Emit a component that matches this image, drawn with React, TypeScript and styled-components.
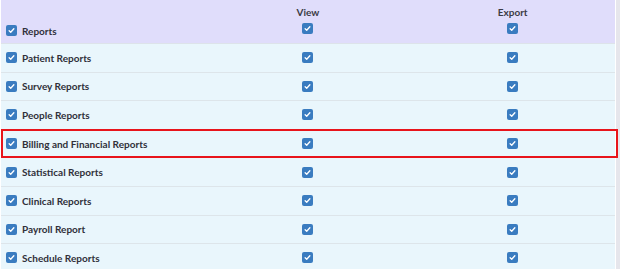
import React from 'react';
import styled, { createGlobalStyle } from 'styled-components';

const GlobalStyle = createGlobalStyle`
  html, body {
    margin: 0;
    padding: 0;
    background: #ffffff;
  }
  body {
    font-family: 'Lato', 'Open Sans', sans-serif;
  }
`;

const Frame = styled.div`
  width: 620px;
  height: 269px;
  overflow: hidden;
  display: flex;
  align-items: flex-start;
  background: #ffffff;
`;

const Table = styled.div`
  width: 614px;
  display: flex;
  flex-direction: column;
  border-left: 1px solid #ffffff;
`;

const ScrollEdge = styled.div`
  width: 4px;
  height: 269px;
  margin-left: 1px;
  background: #e6e6ec;
`;

const Header = styled.div`
  height: 44px;
  flex-shrink: 0;
  background: #e0ddfb;
  display: grid;
  grid-template-columns: repeat(3, 1fr);
  border-bottom: 1px solid #dde3ea;
  box-sizing: border-box;
`;

const HeadLabel = styled.div`
  display: flex;
  align-items: center;
  gap: 5px;
  padding: 18px 0 0 5px;
`;

const HeadCol = styled.div`
  display: flex;
  flex-direction: column;
  align-items: center;
  padding-top: 6px;
  gap: 5px;
`;

const HeadTitle = styled.span`
  font-size: 10px;
  font-weight: 700;
  color: #3b3b45;
  line-height: 12px;
`;

const Row = styled.div<{ $active?: boolean }>`
  height: 28.6px;
  flex-shrink: 0;
  box-sizing: border-box;
  display: grid;
  grid-template-columns: repeat(3, 1fr);
  align-items: center;
  background: #e9f6fc;
  border-bottom: 1px solid #dde5ea;
  position: relative;
  ${(p) =>
    p.$active &&
    `
    &::after {
      content: '';
      position: absolute;
      left: 0;
      right: -3px;
      top: -1px;
      bottom: -1px;
      border: 2px solid #e8141b;
      pointer-events: none;
    }
  `}
`;

const LabelCell = styled.div`
  display: flex;
  align-items: center;
  gap: 5px;
  padding-left: 5px;
`;

const CheckCell = styled.div`
  display: flex;
  justify-content: center;
`;

const Label = styled.span`
  font-size: 10px;
  font-weight: 700;
  color: #30303a;
  white-space: nowrap;
`;

const Box = styled.span`
  width: 11px;
  height: 11px;
  border-radius: 2px;
  background: #3a7cc0;
  display: inline-flex;
  align-items: center;
  justify-content: center;
  flex-shrink: 0;
`;

const Check = () => (
  <Box>
    <svg width="7" height="7" viewBox="0 0 8 8">
      <path d="M1.3 4.3 L3.1 6 L6.7 2" fill="none" stroke="#ffffff" strokeWidth="1.5" strokeLinecap="round" strokeLinejoin="round" />
    </svg>
  </Box>
);

const rows = [
  'Patient Reports',
  'Survey Reports',
  'People Reports',
  'Billing and Financial Reports',
  'Statistical Reports',
  'Clinical Reports',
  'Payroll Report',
  'Schedule Reports',
];

export default function App() {
  return (
    <>
      <GlobalStyle />
      <Frame>
        <Table>
          <Header>
            <HeadLabel>
              <Check />
              <Label>Reports</Label>
            </HeadLabel>
            <HeadCol>
              <HeadTitle>View</HeadTitle>
              <Check />
            </HeadCol>
            <HeadCol>
              <HeadTitle>Export</HeadTitle>
              <Check />
            </HeadCol>
          </Header>
          {rows.map((r) => (
            <Row key={r} $active={r === 'Billing and Financial Reports'}>
              <LabelCell>
                <Check />
                <Label>{r}</Label>
              </LabelCell>
              <CheckCell>
                <Check />
              </CheckCell>
              <CheckCell>
                <Check />
              </CheckCell>
            </Row>
          ))}
        </Table>
        <ScrollEdge />
      </Frame>
    </>
  );
}
